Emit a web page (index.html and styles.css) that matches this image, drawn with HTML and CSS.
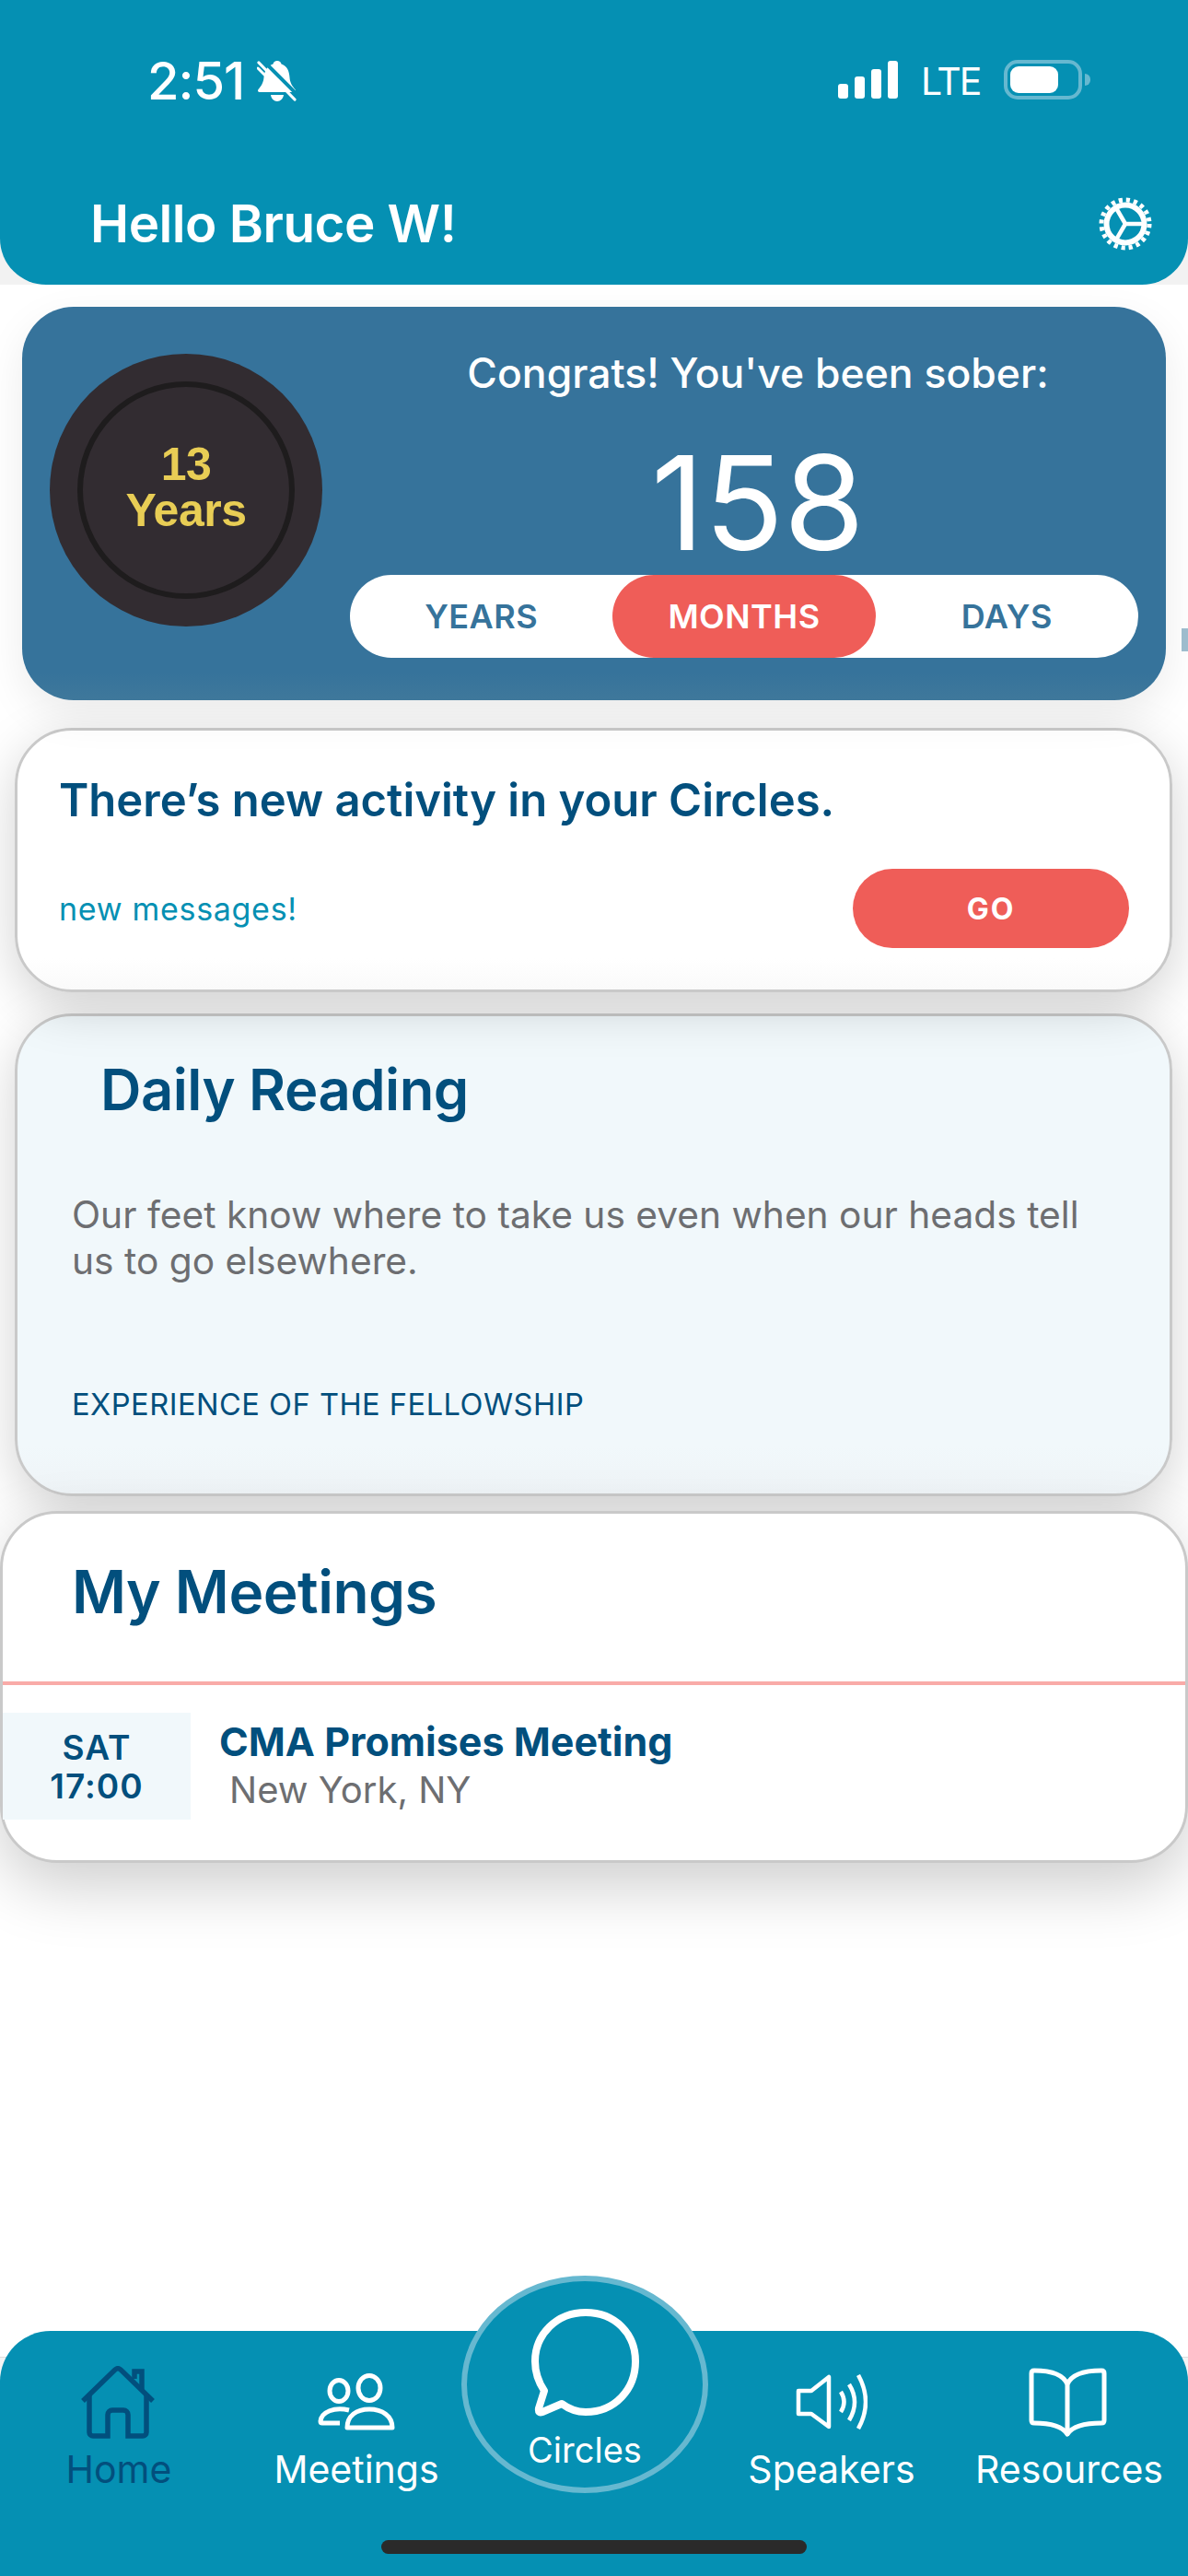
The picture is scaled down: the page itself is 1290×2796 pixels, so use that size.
FILE: index.html
```html
<!DOCTYPE html>
<html lang="en">
<head>
<meta charset="utf-8">
<title>Hello Bruce W!</title>
<link rel="stylesheet" href="styles.css">
</head>
<body>
<div class="app">
  <div class="header-wrap">
    <header class="header">
      <div class="status">
        <div class="status-left">
          <span class="time">2:51</span>
          <svg class="bell" viewBox="0 0 43 45"><path fill="#fff" d="M22 1c2.500 0 4 1.500 4.500 3.500C33 7 35 12 35.500 19c.4 6 3 9.500 6 13 1 1.500.5 3-1.500 3H3c-2 0-2.500-1.500-1.500-3 3-3.500 5.500-7 6-13C8 12 11 7 17.500 4.500 18 2.500 19.500 1 22 1ZM15 38h14c-.5 4-3.500 7-7 7s-6.500-3-7-7Z"/><path stroke="#0590b3" stroke-width="4" d="M5 -1 46 40"/><path stroke="#fff" stroke-width="3.200" stroke-linecap="round" d="M2 3 41 43"/><path stroke="#fff" stroke-width="3" stroke-linecap="round" d="M1 9 8 16"/></svg>
        </div>
        <div class="status-right">
          <div class="signal"><i class="bar b1"></i><i class="bar b2"></i><i class="bar b3"></i><i class="bar b4"></i></div>
          <span class="lte">LTE</span>
          <div class="battery"><div class="battery-fill"></div></div>
          <div class="battery-nub"></div>
        </div>
      </div>
      <div class="greeting">
        <h1 class="hello">Hello Bruce W!</h1>
        <svg class="gear" viewBox="0 0 58 58" fill="none" stroke="#fff"><circle cx="29" cy="29" r="20.500" stroke-width="6"/><circle cx="29" cy="29" r="26" stroke-width="5" stroke-dasharray="4.200 3.970"/><path stroke-width="4.500" d="M29 29H50M29 29 18.500 11M29 29 18.500 47"/></svg>
      </div>
    </header>
  </div>

  <main class="content">
    <section class="sober">
      <div class="medal"><div class="medal-ring"><span>13</span><span>Years</span></div></div>
      <div class="sober-right">
        <p class="congrats">Congrats! You've been sober:</p>
        <p class="count">158</p>
        <div class="toggle">
          <span class="seg">YEARS</span>
          <span class="seg active">MONTHS</span>
          <span class="seg">DAYS</span>
        </div>
      </div>
    </section>
    <i class="edge-mark"></i>

    <section class="card activity">
      <h2 class="activity-title">There’s new activity in your Circles.</h2>
      <div class="activity-row">
        <span class="new-msg">new messages!</span>
        <span class="go">GO</span>
      </div>
    </section>

    <section class="card reading">
      <h2 class="reading-title">Daily Reading</h2>
      <p class="reading-body">Our feet know where to take us even when our heads tell us to go elsewhere.</p>
      <p class="reading-source">EXPERIENCE OF THE FELLOWSHIP</p>
    </section>

    <section class="card meetings">
      <h2 class="meetings-title">My Meetings</h2>
      <div class="meeting">
        <div class="when"><span>SAT</span><span>17:00</span></div>
        <div class="what">
          <span class="meeting-name">CMA Promises Meeting</span>
          <span class="meeting-place">New York, NY</span>
        </div>
      </div>
    </section>
  </main>

  <div class="tab-wrap">
    <nav class="tabs">
      <div class="tab home">
        <div class="tab-icon"><svg class="i-home" viewBox="0 0 82 79" fill="none" stroke="#024f7d" stroke-width="5.500"><path d="M3 38 38 4q3-2.500 6 0L79 38"/><path d="M10 31V72a4 4 0 0 0 4 4H30V53a5 5 0 0 1 5-5H47a5 5 0 0 1 5 5V76H68a4 4 0 0 0 4-4V31"/><path d="M59 14V6H67V26"/></svg></div>
        <span class="tab-label">Home</span>
      </div>
      <div class="tab">
        <div class="tab-icon"><svg class="i-meet" viewBox="0 0 84 62" fill="none" stroke="#fff" stroke-width="5"><ellipse cx="56" cy="16" rx="12" ry="13.500"/><ellipse cx="23" cy="19" rx="10" ry="11.500"/><path stroke-linejoin="round" d="M32 59C32 46 42 39 56 39S81 46 81 59Z"/><path d="M34 40C18 36 4 42 3 52Q3 54 5 54H24"/></svg></div>
        <span class="tab-label">Meetings</span>
      </div>
      <div class="tab tab-center">
        <div class="center-circle">
          <svg class="i-chat" viewBox="0 0 119 118" fill="none" stroke="#fff" stroke-width="8"><path stroke-linejoin="round" d="M60 5C28 5 5 29 5 58C5 70 9 81 15 90L9 109Q8 115 13 113L34 104C42 110 50 113 60 113C92 113 114 88 114 58C114 28 92 5 60 5Z"/></svg>
          <span class="center-label">Circles</span>
        </div>
      </div>
      <div class="tab">
        <div class="tab-icon"><svg class="i-speak" viewBox="0 0 78 60" fill="none" stroke="#fff" stroke-width="4.500"><path stroke-linejoin="round" d="M3 18H17L36 3V57L17 43H3Z"/><path d="M49 19Q56 30 49 41M58 11Q70 30 58 50M68 1Q84 30 68 59"/></svg></div>
        <span class="tab-label">Speakers</span>
      </div>
      <div class="tab">
        <div class="tab-icon"><svg class="i-book" viewBox="0 0 85 75" fill="none" stroke="#fff" stroke-width="5"><path stroke-linejoin="round" d="M42 18C38 8 25 3 6 3Q3 3 3 6V57Q3 60 6 60C22 60 36 63 42 72C48 63 62 60 79 60Q82 60 82 57V6Q82 3 79 3C60 3 46 8 42 18ZM42 18V68"/></svg></div>
        <span class="tab-label">Resources</span>
      </div>
    </nav>
    <div class="home-indicator"></div>
  </div>
</div>
</body>
</html>
```
FILE: styles.css
```css
* { box-sizing: border-box; }
html, body { margin: 0; padding: 0; }
body { background: #fff; font-family: Inter, "Liberation Sans", sans-serif; }
h1, h2, p { margin: 0; }
.app { width: 1290px; height: 2796px; display: flex; flex-direction: column; overflow: hidden; }

/* header */
.header-wrap { background: #f2f2f2; flex: none; position: relative; z-index: 3; }
.header { height: 309px; background: #0590b3; border-radius: 0 0 50px 50px; color: #fff; display: flex; flex-direction: column; }
.status { height: 200px; display: flex; justify-content: space-between; align-items: flex-start; padding: 65px 106px 0 160px; }
.status-left { display: flex; align-items: flex-start; gap: 14px; }
.time { font-size: 56px; font-weight: 500; line-height: 46px; letter-spacing: -1px; }
.bell { width: 43px; height: 45px; display: block; }
.status-right { display: flex; align-items: flex-start; }
.signal { display: flex; align-items: flex-end; gap: 7px; height: 42px; margin-right: 25px; }
.bar { width: 11px; background: #fff; border-radius: 3px; display: block; }
.b1 { height: 16px; } .b2 { height: 24px; } .b3 { height: 32px; } .b4 { height: 41px; }
.lte { font-size: 41px; line-height: 42px; font-weight: 400; width: 90px; letter-spacing: -2px; margin-top: 2px; }
.battery { width: 85px; height: 43px; border: 4px solid #66b8d0; border-radius: 15px; padding: 3px; }
.battery-fill { width: 52px; height: 29px; background: #fff; border-radius: 9px; }
.battery-nub { width: 6px; height: 13px; margin: 15px 0 0 3px; background: #66b8d0; border-radius: 0 6px 6px 0; }
.greeting { display: flex; justify-content: space-between; align-items: center; padding: 0 39px 0 98px; margin-top: 13px; height: 60px; }
.hello { font-size: 56.500px; font-weight: 600; line-height: 60px; letter-spacing: -.5px; white-space: nowrap; }
.gear { width: 58px; height: 58px; display: block; }

/* content */
.content { flex: 1; position: relative; display: flex; flex-direction: column; align-items: stretch; }
.sober { height: 427px; margin: 24px 24px 0; background: linear-gradient(#36739b 93%, #3f789b); border-radius: 56px; padding: 0 30px; display: flex; gap: 30px; position: relative; z-index: 2; box-shadow: 0 16px 46px rgba(0,0,0,.08); }
.medal { width: 296px; height: 296px; margin-top: 51px; flex: none; border-radius: 50%; background: #322c31; display: flex; align-items: center; justify-content: center; }
.medal-ring { width: 236px; height: 236px; border-radius: 50%; border: 6px solid #1e1c1d; display: flex; flex-direction: column; align-items: center; padding-top: 59px; font-family: "Liberation Sans", Arial, sans-serif; font-weight: 700; font-size: 50px; line-height: 50px; color: #e8cd55; letter-spacing: -.5px; }
.sober-right { flex: 1; display: flex; flex-direction: column; color: #fff; }
.congrats { padding-left: 30px; text-align: center; font-size: 44.500px; font-weight: 500; line-height: 54px; margin-top: 45px; white-space: nowrap; }
.count { padding-left: 30px; text-align: center; font-size: 142px; font-weight: 400; line-height: 140px; margin-top: 43px; }
.toggle { height: 90px; margin-top: 9px; background: #fff; border-radius: 45px; display: grid; grid-template-columns: 1fr 1fr 1fr; }
.seg { display: flex; align-items: center; justify-content: center; font-size: 36px; font-weight: 600; color: #36739b; border-radius: 45px; letter-spacing: .5px; }
.seg.active { background: #ef5d58; color: #fff; }
.edge-mark { position: absolute; right: 0; top: 373px; width: 7px; height: 25px; background: #9fbfd0; }

.card { border: 3.500px solid #c9c9c9; position: relative; box-shadow: 0 16px 56px rgba(0,0,0,.18); }
.activity { height: 287px; margin: 30px 17px 0 16px; border-radius: 62px; background: linear-gradient(#fff 88%, #fafafa); padding: 46px 44px 0 45px; z-index: 1; }
.activity-title { font-size: 49px; font-weight: 600; line-height: 60px; color: #024f7d; white-space: nowrap; }
.activity-row { display: flex; justify-content: space-between; align-items: center; margin-top: 44px; }
.new-msg { font-size: 34px; color: #0590b3; letter-spacing: .7px; }
.go { width: 300px; height: 86px; border-radius: 43px; background: #ef5d58; color: #fff; font-size: 32px; font-weight: 700; letter-spacing: 2px; display: flex; align-items: center; justify-content: center; }

.reading { height: 524px; margin: 23px 17px 0 16px; border-radius: 62px; background: linear-gradient(#f1f8fb 90%, #eff4f7); padding: 44px 90px 0 59px; }
.reading-title { margin-left: 31px; font-size: 61.500px; font-weight: 600; line-height: 72px; color: #024f7d; letter-spacing: -.5px; }
.reading-body { margin-top: 75px; font-size: 40.700px; line-height: 50px; color: #6d6e71; }
.reading-source { margin-top: 110px; font-size: 32.600px; line-height: 40px; color: #024f7d; letter-spacing: .5px; white-space: nowrap; }

.meetings { height: 382px; margin-top: 16px; border-radius: 62px; background: #fff; box-shadow: 0 24px 70px rgba(0,0,0,.2); }
.meetings-title { font-size: 64px; font-weight: 600; line-height: 78px; padding: 46px 0 0 75px; height: 186px; border-bottom: 4px solid #f9aba8; color: #024f7d; letter-spacing: -.5px; }
.meeting { display: flex; margin-top: 30px; }
.when { width: 204px; height: 116px; background: #f1f8fb; display: flex; flex-direction: column; align-items: center; justify-content: center; padding-top: 2px; font-size: 37px; font-weight: 600; line-height: 42px; color: #024f7d; letter-spacing: 1px; }
.what { display: flex; flex-direction: column; padding: 5px 0 0 31px; }
.meeting-name { font-size: 43px; font-weight: 700; line-height: 52px; color: #024f7d; white-space: nowrap; }
.meeting-place { font-size: 40px; line-height: 50px; margin-top: 2px; color: #6d6e71; padding-left: 11px; }

/* tabs */
.tab-wrap { flex: none; height: 266px; position: relative; background: linear-gradient(#fff 28px, #dedede 28px, #dedede 29px, #f4f4f4 29px); }
.tabs { height: 266px; background: #0590b3; border-radius: 55px 55px 0 0; display: grid; grid-template-columns: repeat(5, 258px); color: #fff; }
.tab { display: flex; flex-direction: column; align-items: center; position: relative; }
.tab-icon { height: 117px; display: flex; align-items: flex-end; }
.tab-icon svg { display: block; }
.tab-label { font-size: 41px; line-height: 48px; margin-top: 9px; white-space: nowrap; }
.home .tab-label { color: #024f7d; }
.i-home { width: 82px; height: 79px; margin-left: -3px; }
.i-meet { width: 84px; height: 62px; margin-bottom: 9px; }
.i-speak { width: 78px; height: 60px; margin-bottom: 10px; }
.i-book { width: 85px; height: 75px; margin-bottom: 2px; margin-left: -4px; }
.center-circle { position: absolute; top: -60px; left: -15px; width: 268px; height: 236px; border-radius: 50%; background: #0590b3; border: 6px solid #66b8d0; display: flex; flex-direction: column; align-items: center; padding-top: 29px; }
.i-chat { width: 119px; height: 118px; display: block; }
.center-label { font-size: 38px; line-height: 46px; margin-top: 13px; }
.home-indicator { position: absolute; left: 414px; top: 227px; width: 462px; height: 15px; border-radius: 8px; background: #2a2a2a; }
```
